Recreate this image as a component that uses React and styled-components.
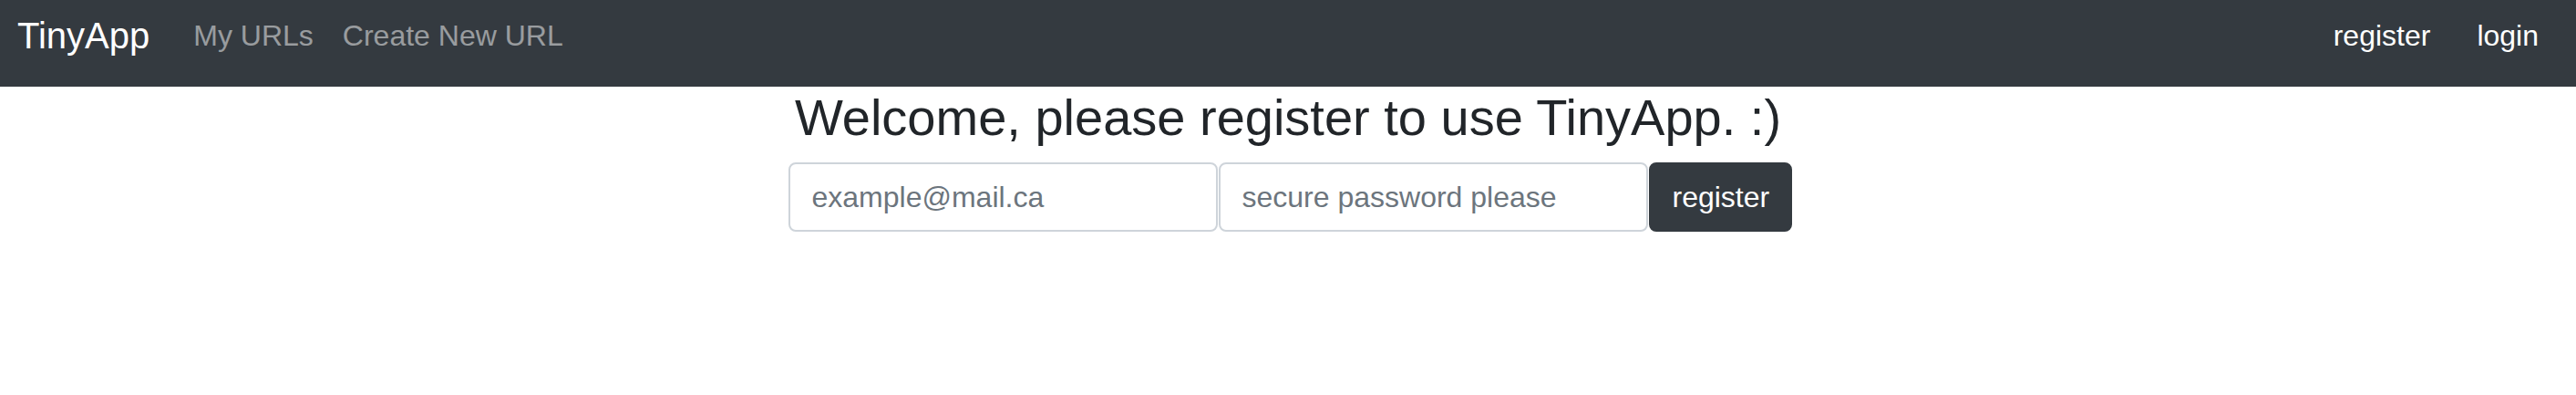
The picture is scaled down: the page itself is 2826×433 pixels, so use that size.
import React, { useState } from 'react'
import styled, { createGlobalStyle } from 'styled-components'

const GlobalStyle = createGlobalStyle`
  * {
    box-sizing: border-box;
  }

  body {
    margin: 0;
    background: #fff;
    font-family: "Liberation Sans", Arial, sans-serif;
    color: #212529;
  }
`;

const Navbar = styled.nav`
  display: flex;
  align-items: flex-start;
  height: 95px;
  padding: 0 41px 0 19px;
  background: #343a40;
`;

const Brand = styled.a`
  margin: 9px 48px 0 0;
  font-size: 40px;
  line-height: 60px;
  color: #fff;
  text-decoration: none;
`;

const NavGroup = styled.div`
  display: flex;
  gap: ${props => props.$gap}px;
  margin-left: ${props => (props.$right ? 'auto' : '0')};
`;

const NavLink = styled.a`
  margin-top: 15px;
  font-size: 32px;
  line-height: 48px;
  color: ${props => (props.$light ? '#fff' : 'rgba(255, 255, 255, 0.5)')};
  text-decoration: none;
`;

const Main = styled.main`
  display: flex;
  flex-direction: column;
  align-items: center;
`;

const Title = styled.h3`
  margin: 0 0 16px;
  font-size: 56px;
  font-weight: 400;
  line-height: 67.2px;
  color: #212529;
`;

const Form = styled.form`
  display: flex;
  gap: 1px;
  padding-left: 4px;
`;

const Input = styled.input`
  width: 471px;
  height: 76px;
  padding: 12px 24px;
  border: 2px solid #ced4da;
  border-radius: 8px;
  font-family: "Liberation Sans", Arial, sans-serif;
  font-size: 32px;
  line-height: 48px;
  color: #495057;
  background: #fff;
  outline: none;

  &::placeholder {
    color: #6c757d;
  }
`;

const Button = styled.button`
  width: 157px;
  height: 76px;
  padding: 12px 24px;
  border: 2px solid #343a40;
  border-radius: 8px;
  background: #343a40;
  color: #fff;
  font-family: "Liberation Sans", Arial, sans-serif;
  font-size: 32px;
  line-height: 48px;
  cursor: pointer;
`;

export default function App() {
  const [email, setEmail] = useState('')
  const [password, setPassword] = useState('')

  return (
    <>
      <GlobalStyle />
      <Navbar>
        <Brand href="#">TinyApp</Brand>
        <NavGroup $gap={32}>
          <NavLink href="#">My URLs</NavLink>
          <NavLink href="#">Create New URL</NavLink>
        </NavGroup>
        <NavGroup $right $gap={51}>
          <NavLink $light href="#">register</NavLink>
          <NavLink $light href="#">login</NavLink>
        </NavGroup>
      </Navbar>
      <Main>
        <Title>Welcome, please register to use TinyApp. :)</Title>
        <Form onSubmit={e => e.preventDefault()}>
          <Input
            type="email"
            placeholder="example@mail.ca"
            value={email}
            onChange={e => setEmail(e.target.value)}
          />
          <Input
            type="password"
            placeholder="secure password please"
            value={password}
            onChange={e => setPassword(e.target.value)}
          />
          <Button type="submit">register</Button>
        </Form>
      </Main>
    </>
  )
}
